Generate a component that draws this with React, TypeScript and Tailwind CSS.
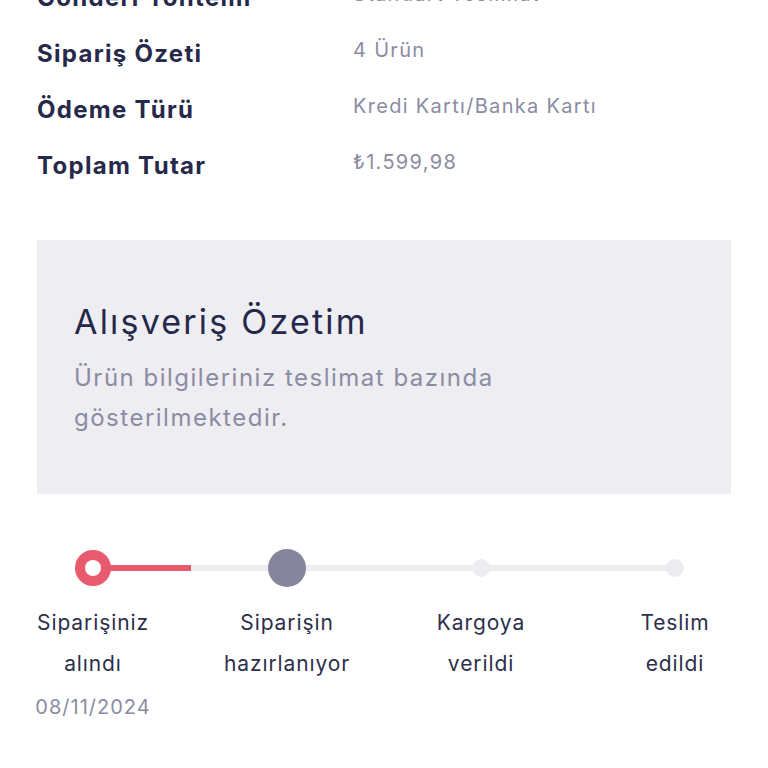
import React from "react";

const rows = [
  ["Gönderi Yöntemi", "Standart Teslimat"],
  ["Sipariş Özeti", "4 Ürün"],
  ["Ödeme Türü", "Kredi Kartı/Banka Kartı"],
  ["Toplam Tutar", "₺1.599,98"],
];

const steps = [
  ["Siparişiniz", "alındı"],
  ["Siparişin", "hazırlanıyor"],
  ["Kargoya", "verildi"],
  ["Teslim", "edildi"],
];

export default function App() {
  return (
    <div
      className="w-[768px] h-[768px] overflow-hidden bg-white"
      style={{ fontFamily: "Inter, 'Noto Sans', sans-serif" }}
    >
      <div className="px-[37px] -mt-[30px]">
        <div className="flex flex-col">
          {rows.map(([l, v]) => (
            <div key={l} className="flex h-[56px] items-center">
              <div className="w-[316px] text-[24px] font-bold text-[#26294a] tracking-[1.3px]">{l}</div>
              <div className="text-[20px] text-[#8b8ca3] -mt-[8px] tracking-[1.3px]">{v}</div>
            </div>
          ))}
        </div>

        <div className="mt-[46px] h-[254px] bg-[#ededf2] px-[37px] pt-[58px]">
          <div className="text-[34px] text-[#25284a] leading-[48px] tracking-[2.2px]">Alışveriş Özetim</div>
          <div className="mt-[12px] text-[24px] text-[#8b8ca3] leading-[40px] w-[560px] tracking-[1.5px]">
            Ürün bilgileriniz teslimat bazında<br />gösterilmektedir.
          </div>
        </div>

        <div className="relative mt-[56px]">
          <div className="absolute left-[56px] right-[56px] top-[15px] h-[6px] bg-[#ececf1]" />
          <div className="absolute left-[56px] w-[98px] top-[15px] h-[6px] bg-[#e85a6e]" />
          <div className="relative flex justify-between">
            {steps.map(([a, b], i) => (
              <div key={a} className="w-[112px] flex flex-col items-center">
                <div className="h-[36px] flex items-center justify-center">
                  {i === 0 && (
                    <div className="w-[36px] h-[36px] rounded-full bg-[#e85a6e] flex items-center justify-center">
                      <div className="w-[16px] h-[16px] rounded-full bg-white" />
                    </div>
                  )}
                  {i === 1 && <div className="w-[38px] h-[38px] rounded-full bg-[#85869e]" />}
                  {i > 1 && <div className="w-[18px] h-[18px] rounded-full bg-[#ececf1]" />}
                </div>
                <div className="mt-[16px] text-[21px] leading-[41px] text-[#2d2f4b] text-center whitespace-nowrap tracking-[0.9px]">
                  <div>{a}</div>
                  <div>{b}</div>
                </div>
                {i === 0 && (
                  <div className="mt-[8px] text-[20px] text-[#8b8ca3] whitespace-nowrap tracking-[1px]">08/11/2024</div>
                )}
              </div>
            ))}
          </div>
        </div>
      </div>
    </div>
  );
}
